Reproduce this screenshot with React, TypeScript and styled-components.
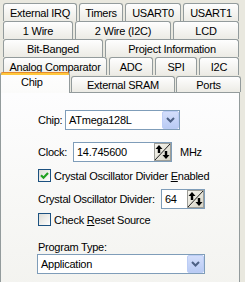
import React from 'react';
import styled, { createGlobalStyle } from 'styled-components';

const GlobalStyle = createGlobalStyle`
  html, body {
    margin: 0;
    padding: 0;
    background: #e9e8df;
  }
  body {
    font-family: 'Liberation Sans', Arial, sans-serif;
    font-size: 11px;
    letter-spacing: -0.25px;
    color: #000;
  }
`;

const Window = styled.div`
  width: 245px;
  height: 282px;
  overflow: hidden;
  box-sizing: border-box;
  padding-top: 3px;
  background: #e9e8df;
`;

const TabRow = styled.div<{ $pl?: number; $h?: number; $gap?: number }>`
  display: flex;
  align-items: flex-end;
  height: ${(p) => p.$h ?? 18}px;
  padding-left: ${(p) => p.$pl ?? 3}px;
  gap: ${(p) => p.$gap ?? 2}px;
`;

const Tab = styled.div<{ $w: number; $h?: number }>`
  box-sizing: border-box;
  width: ${(p) => p.$w}px;
  height: ${(p) => p.$h ?? 18}px;
  display: flex;
  align-items: center;
  justify-content: center;
  border: 1px solid #939b9c;
  border-bottom: none;
  border-radius: 3px 3px 0 0;
  background: linear-gradient(#fefefe, #ecebe5);
  white-space: nowrap;
`;

const ActiveTab = styled(Tab)`
  position: relative;
  z-index: 1;
  margin-bottom: -1px;
  padding-bottom: 2px;
  justify-content: flex-start;
  padding-left: 20px;
  border-top: 1px solid #e68b2c;
  background: linear-gradient(#ffc83c 0 2px, #fdfdfd 2px, #fbfbfa);
`;

const Panel = styled.div`
  box-sizing: border-box;
  width: 240px;
  height: 200px;
  border: 1px solid #939b9c;
  background: linear-gradient(#fdfdfe, #f3f3ef);
  padding-left: 37px;
  display: flex;
  flex-direction: column;
  align-items: flex-start;
`;

const Row = styled.div<{ $mt: number; $h?: number }>`
  display: flex;
  align-items: center;
  margin-top: ${(p) => p.$mt}px;
  height: ${(p) => p.$h ?? 20}px;
`;

const Label = styled.span<{ $w?: number }>`
  display: inline-block;
  width: ${(p) => (p.$w ? `${p.$w}px` : 'auto')};
  white-space: nowrap;
`;

const Field = styled.div<{ $w: number; $ml?: number }>`
  box-sizing: border-box;
  width: ${(p) => p.$w}px;
  height: 20px;
  margin-left: ${(p) => p.$ml ?? 0}px;
  border: 1px solid #7f9db9;
  background: #fff;
  display: flex;
  align-items: stretch;
`;

const FieldText = styled.span<{ $pl?: number }>`
  flex: 1;
  display: flex;
  align-items: center;
  padding-left: ${(p) => p.$pl ?? 3}px;
  white-space: nowrap;
`;

const DropButton = styled.span`
  box-sizing: border-box;
  width: 17px;
  display: flex;
  align-items: center;
  justify-content: center;
  border: 1px solid #bccdf5;
  border-radius: 2px;
  background: linear-gradient(#d3defb, #b9cbf4);
`;

const Unit = styled.span`
  margin-left: 8px;
`;

const CheckRow = styled.label<{ $mt: number }>`
  display: flex;
  align-items: center;
  gap: 3px;
  height: 15px;
  margin-top: ${(p) => p.$mt}px;
`;

const Box = styled.span`
  box-sizing: border-box;
  width: 13px;
  height: 13px;
  border: 1px solid #1c5180;
  background: linear-gradient(135deg, #dcdcd6, #ffffff);
  display: flex;
  align-items: center;
  justify-content: center;
`;

const Chevron = () => (
  <svg width="9" height="6" viewBox="0 0 9 6">
    <polyline points="1,1 4.5,4.5 8,1" fill="none" stroke="#4d6185" strokeWidth="2" />
  </svg>
);

const Spinner = () => (
  <svg width="17" height="18" viewBox="0 0 17 18">
    <defs>
      <linearGradient id="spinbg" x1="0" y1="0" x2="1" y2="1">
        <stop offset="0" stopColor="#f7f6f0" />
        <stop offset="1" stopColor="#d6d3c4" />
      </linearGradient>
    </defs>
    <rect x="0.5" y="0.5" width="16" height="17" fill="url(#spinbg)" stroke="#9d9d97" />
    <line x1="1" y1="17" x2="16" y2="1" stroke="#222" strokeWidth="1" />
    <path d="M5 2 L8.5 6 H6.2 V10 H3.8 V6 H1.5 Z" fill="#000" />
    <path d="M12 16 L8.5 12 H10.8 V8 H13.2 V12 H15.5 Z" fill="#000" />
  </svg>
);

const Tick = () => (
  <svg width="9" height="9" viewBox="0 0 9 9">
    <path d="M1 4.2 L3.5 6.7 L8 2" fill="none" stroke="#21a121" strokeWidth="2.2" />
  </svg>
);

export default function App() {
  return (
    <>
      <GlobalStyle />
      <Window>
        <TabRow>
          <Tab $w={74}>External IRQ</Tab>
          <Tab $w={44}>Timers</Tab>
          <Tab $w={56}>USART0</Tab>
          <Tab $w={56}>USART1</Tab>
        </TabRow>
        <TabRow>
          <Tab $w={70}>1 Wire</Tab>
          <Tab $w={96}>2 Wire (I2C)</Tab>
          <Tab $w={66}>LCD</Tab>
        </TabRow>
        <TabRow>
          <Tab $w={100}>Bit-Banged</Tab>
          <Tab $w={134}>Project Information</Tab>
        </TabRow>
        <TabRow>
          <Tab $w={104}>Analog Comparator</Tab>
          <Tab $w={44}>ADC</Tab>
          <Tab $w={42}>SPI</Tab>
          <Tab $w={40}>I2C</Tab>
        </TabRow>
        <TabRow $pl={0} $h={17} $gap={1}>
          <ActiveTab $w={70} $h={21}>Chip</ActiveTab>
          <Tab $w={104} $h={16}>External SRAM</Tab>
          <Tab $w={65} $h={16}>Ports</Tab>
        </TabRow>
        <Panel>
          <Row $mt={17}>
            <Label $w={27}>Chip:</Label>
            <Field $w={115}>
              <FieldText>ATmega128L</FieldText>
              <DropButton>
                <Chevron />
              </DropButton>
            </Field>
          </Row>
          <Row $mt={12}>
            <Label $w={35}>Clock:</Label>
            <Field $w={99}>
              <FieldText>14.745600</FieldText>
              <Spinner />
            </Field>
            <Unit>MHz</Unit>
          </Row>
          <CheckRow $mt={6}>
            <Box>
              <Tick />
            </Box>
            <span>
              Crystal Oscillator Divider <u>E</u>nabled
            </span>
          </CheckRow>
          <Row $mt={6}>
            <Label $w={123}>Crystal Oscillator Divider:</Label>
            <Field $w={44}>
              <FieldText>64</FieldText>
              <Spinner />
            </Field>
          </Row>
          <CheckRow $mt={3}>
            <Box />
            <span>
              Check <u>R</u>eset Source
            </span>
          </CheckRow>
          <Row $mt={13} $h={14}>
            <Label>Program Type:</Label>
          </Row>
          <Row $mt={0}>
            <Field $w={168} $ml={-1}>
              <FieldText>Application</FieldText>
              <DropButton>
                <Chevron />
              </DropButton>
            </Field>
          </Row>
        </Panel>
      </Window>
    </>
  );
}
